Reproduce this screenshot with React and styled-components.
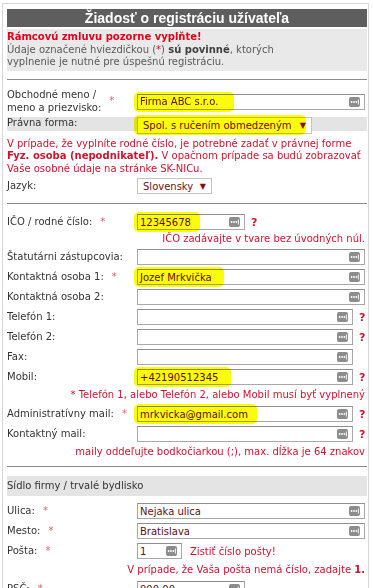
import React from 'react'
import styled, { createGlobalStyle } from 'styled-components';

const Global = createGlobalStyle`
  html, body {
    margin: 0;
    padding: 0;
    background: #fff;
  }
  body {
    font-family: "DejaVu Sans", Verdana, sans-serif;
    font-size: 10px;
    color: #333;
  }
`

function InputIcon() {
    return (
        <Icon width="11" height="10" viewBox="0 0 11 10">
            <rect x="0" y="0" width="11" height="10" rx="2" fill="#8c8c8c" />
            <circle cx="2.6" cy="5" r="0.9" fill="#fff" />
            <circle cx="5" cy="5" r="0.9" fill="#fff" />
            <circle cx="7.4" cy="5" r="0.9" fill="#fff" />
            <rect x="8.9" y="2.5" width="0.9" height="5" fill="#fff" />
        </Icon>
    )
}

function TextField({ value, w = 228, mark, help }) {
    return (
        <>
            <Field $w={w}>
                {mark && <Highlight style={{ width: mark }} />}
                <FieldText>{value}</FieldText>
                <InputIcon />
            </Field>
            {help && <Help>?</Help>}
        </>
    )
}

function Label({ children, req }) {
    return (
        <LabelBox>
            <span>{children}</span>
            {req && <Req>*</Req>}
        </LabelBox>
    )
}

export default function App() {
    return (
        <>
            <Global />
            <Panel>
                <Header>Žiadosť o registráciu užívateľa</Header>
                <Intro>
                    <Warning>Rámcovú zmluvu pozorne vyplňte!</Warning>
                    <br />
                    Údaje označené hviezdičkou (<Star>*</Star>) <b>sú povinné</b>, ktorých
                    <br />
                    vyplnenie je nutné pre úspešnú registráciu.
                </Intro>
                <Rule $top={8} />

                <Row $h={26} $top={9}>
                    <Label req>Obchodné meno /<br />meno a priezvisko:</Label>
                    <TextField value="Firma ABC s.r.o." mark={100} />
                </Row>
                <Row $h={14} $top={2} $band>
                    <Label>Právna forma:</Label>
                    <Select $w={175} $tall>
                        <Highlight style={{ width: 172 }} />
                        <SelectText>Spol. s ručením obmedzeným</SelectText>
                        <Arrow>▼</Arrow>
                    </Select>
                </Row>
                <Note $top={7}>
                    V prípade, že vyplníte rodné číslo, je potrebné zadať v právnej forme
                    <br />
                    <b>Fyz. osoba (nepodnikateľ).</b> V opačnom prípade sa budú zobrazovať
                    <br />
                    Vaše osobné údaje na stránke SK-NICu.
                </Note>
                <Row $h={20} $top={1}>
                    <Label>Jazyk:</Label>
                    <Select $w={75}>
                        <SelectText>Slovensky</SelectText>
                        <Arrow>▼</Arrow>
                    </Select>
                </Row>
                <Rule $top={7} />

                <Row $top={8}>
                    <Label req>IČO / rodné číslo:</Label>
                    <TextField value="12345678" w={108} mark={66} help />
                </Row>
                <Note $right $h={15}><span>IČO zadávajte v tvare bez úvodných núl.</span></Note>
                <Row>
                    <Label>Štatutárni zástupcovia:</Label>
                    <TextField value="" />
                </Row>
                <Row>
                    <Label req>Kontaktná osoba 1:</Label>
                    <TextField value="Jozef Mrkvička" mark={90} />
                </Row>
                <Row>
                    <Label>Kontaktná osoba 2:</Label>
                    <TextField value="" />
                </Row>
                <Row>
                    <Label>Telefón 1:</Label>
                    <TextField value="" w={216} help />
                </Row>
                <Row>
                    <Label>Telefón 2:</Label>
                    <TextField value="" w={216} help />
                </Row>
                <Row>
                    <Label>Fax:</Label>
                    <TextField value="" w={216} />
                </Row>
                <Row>
                    <Label>Mobil:</Label>
                    <TextField value="+42190512345" w={216} mark={97} help />
                </Row>
                <Note $right $h={17}><span>* Telefón 1, alebo Telefón 2, alebo Mobil musí byť vyplnený</span></Note>
                <Row>
                    <Label req>Administratívny mail:</Label>
                    <TextField value="mrkvicka@gmail.com" w={216} mark={123} help />
                </Row>
                <Row>
                    <Label>Kontaktný mail:</Label>
                    <TextField value="" w={216} help />
                </Row>
                <Note $right $h={17}><span>maily oddeľujte bodkočiarkou (;), max. dĺžka je 64 znakov</span></Note>
                <Rule $top={5} />

                <Section>Sídlo firmy / trvalé bydlisko</Section>
                <Row $top={5}>
                    <Label req>Ulica:</Label>
                    <TextField value="Nejaka ulica" />
                </Row>
                <Row>
                    <Label req>Mesto:</Label>
                    <TextField value="Bratislava" />
                </Row>
                <Row>
                    <Label req>Pošta:</Label>
                    <TextField value="1" w={45} />
                    <PostLink>Zistiť číslo pošty!</PostLink>
                </Row>
                <Note $right $h={18}><span>V prípade, že Vaša pošta nemá číslo, zadajte <b>1.</b></span></Note>
                <Row>
                    <Label req>PSČ:</Label>
                    <TextField value="900 00" w={108} />
                </Row>
            </Panel>
        </>
    )
}

const Panel = styled.div`
    margin: 3px 0 0 2px;
    width: 367px;
    box-sizing: border-box;
    border: 1px solid #d6d6d6;
    border-bottom: none;
    padding: 5px 1px 40px 4px;
`
const Header = styled.h1`
    margin: 0;
    height: 18px;
    background-color: #5e5e5e;
    color: #fff;
    text-align: center;
    font-family: "Liberation Sans Narrow", "Liberation Sans", Arial, sans-serif;
    font-size: 14px;
    font-weight: bold;
    line-height: 18px;
`
const Intro = styled.div`
    margin-top: 2px;
    background-color: #e9e9e9;
    color: #595959;
    line-height: 12.5px;
    padding: 2px 0 2px 0;
    b {
        color: #404040;
    }
`
const Warning = styled.strong`
    color: #e4001b;
`
const Star = styled.span`
    color: #e4001b;
`
const Rule = styled.div`
    margin-top: ${p => p.$top}px;
    height: 1px;
    background-color: #8c8c8c;
`
const Row = styled.div`
    display: flex;
    align-items: center;
    height: ${p => p.$h || 20}px;
    margin-top: ${p => p.$top || 0}px;
    background-color: ${p => p.$band ? '#e4e4e4' : 'transparent'};
`
const LabelBox = styled.div`
    display: flex;
    align-items: center;
    width: 130px;
    flex-shrink: 0;
    line-height: 12.5px;
    color: #333;
`
const Req = styled.span`
    margin-left: 8px;
    color: #e0606e;
`
const Field = styled.div`
    position: relative;
    display: flex;
    align-items: center;
    width: ${p => p.$w}px;
    height: 16px;
    box-sizing: border-box;
    border: 1px solid #a8a8a8;
    border-top-color: #8f8f8f;
    background: #fff;
    padding: 0 4px 0 2px;
`
const FieldText = styled.span`
    flex: 1;
    color: #5e0f22;
    white-space: nowrap;
`
const Highlight = styled.span`
    position: absolute;
    left: -4px;
    top: -3px;
    height: 20px;
    background-color: #fbfb0c;
    border-radius: 5px;
    mix-blend-mode: multiply;
    filter: blur(0.7px);
    pointer-events: none;
`
const Icon = styled.svg`
    display: block;
    flex-shrink: 0;
`
const Help = styled.span`
    margin-left: 6px;
    color: #d5102e;
    font-weight: bold;
    font-size: 11px;
`
const Select = styled.div`
    position: relative;
    display: flex;
    align-items: center;
    align-self: flex-start;
    width: ${p => p.$w}px;
    height: ${p => p.$tall ? 17 : 16}px;
    box-sizing: border-box;
    border: 1px solid #c4c4c4;
    background: #fff;
    padding: 0 5px 0 5px;
    margin-top: ${p => p.$tall ? 0 : 2}px;
`
const SelectText = styled.span`
    flex: 1;
    color: #6a1424;
    white-space: nowrap;
`
const Arrow = styled.span`
    color: #8a0a12;
    font-size: 8px;
`
const Note = styled.div`
    margin-top: ${p => p.$top || 0}px;
    height: ${p => p.$h ? p.$h + 'px' : 'auto'};
    display: ${p => p.$right ? 'flex' : 'block'};
    align-items: center;
    justify-content: flex-end;
    padding-right: 2px;
    color: #d0122e;
    line-height: 12.5px;
    white-space: nowrap;
    b {
        color: #d0122e;
    }
`
const Section = styled.div`
    margin-top: 9px;
    height: 20px;
    line-height: 20px;
    background-color: #e4e4e4;
    color: #333;
`
const PostLink = styled.span`
    margin-left: 8px;
    color: #d0122e;
`
